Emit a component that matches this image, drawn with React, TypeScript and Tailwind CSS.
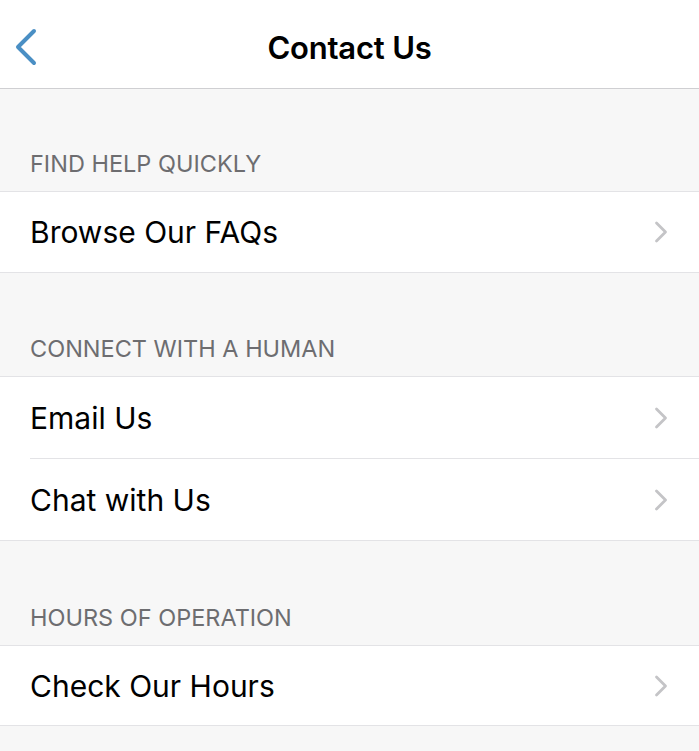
import React from "react";

const Chevron = () => (
  <svg width="16" height="24" viewBox="0 0 16 24" fill="none">
    <path d="M3.5 3 L12.5 12 L3.5 21" stroke="#c4c4c7" strokeWidth="2.8" strokeLinecap="round" strokeLinejoin="round" />
  </svg>
);

const Row = ({ label, inset, h }: { label: string; inset?: boolean; h: string }) => (
  <div className={`relative flex items-center justify-between bg-white pl-[30px] pr-[30px] ${h}`}>
    <span className="text-[30px] leading-none text-black">{label}</span>
    <Chevron />
    {inset && <div className="absolute bottom-0 left-[30px] right-0 h-px bg-[#e3e3e6]" />}
  </div>
);

const Header = ({ label, h }: { label: string; h: string }) => (
  <div className={`flex items-end pb-[16px] pl-[30px] ${h}`}>
    <span className="text-[23.5px] leading-none uppercase text-[#6d6d70]">{label}</span>
  </div>
);

export default function App() {
  return (
    <div className="min-h-[751px] w-[699px] bg-[#f7f7f7]" style={{ fontFamily: "Inter, 'Noto Sans', sans-serif" }}>
      <div className="relative flex h-[89px] items-center justify-center border-b border-[#cfcfd2] bg-white pt-[6px]">
        <svg className="absolute left-[13px] top-[27px]" width="26" height="40" viewBox="0 0 26 40" fill="none">
          <path d="M21 4 L5 20 L21 36" stroke="#4a8fc4" strokeWidth="4" strokeLinecap="round" strokeLinejoin="round" />
        </svg>
        <span className="text-[31px] leading-none font-semibold text-black tracking-[-0.2px]">Contact Us</span>
      </div>
      <Header label="Find Help Quickly" h="h-[102px]" />
      <div className="border-y border-[#e3e3e6]">
        <Row label="Browse Our FAQs" h="h-[80px]" />
      </div>
      <Header label="Connect with a Human" h="h-[103px]" />
      <div className="border-y border-[#e3e3e6]">
        <Row label="Email Us" inset h="h-[82px]" />
        <Row label="Chat with Us" h="h-[81px]" />
      </div>
      <Header label="Hours of Operation" h="h-[104px]" />
      <div className="border-y border-[#e3e3e6]">
        <Row label="Check Our Hours" h="h-[79px]" />
      </div>
    </div>
  );
}
